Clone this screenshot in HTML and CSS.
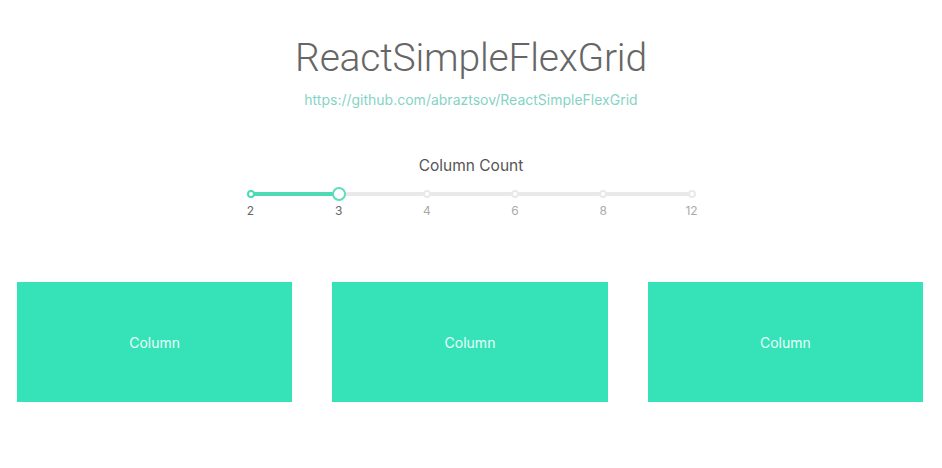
FILE: index.html
```html
<!DOCTYPE html>
<html>
<head>
<meta charset="utf-8">
<link rel="stylesheet" href="styles.css">
</head>
<body>
<div class="page">
  <header class="header">
    <h1 class="title">ReactSimpleFlexGrid</h1>
    <a class="link" href="#">https://github.com/abraztsov/ReactSimpleFlexGrid</a>
  </header>
  <section class="control">
    <div class="control-label">Column Count</div>
    <div class="slider">
      <div class="rail"></div>
      <div class="track" style="width: 20%"></div>
      <span class="dot active" style="left: 0%"></span>
      <span class="dot active" style="left: 20%"></span>
      <span class="dot" style="left: 40%"></span>
      <span class="dot" style="left: 60%"></span>
      <span class="dot" style="left: 80%"></span>
      <span class="dot" style="left: 100%"></span>
      <span class="handle" style="left: 20%"></span>
      <span class="mark active" style="left: 0%">2</span>
      <span class="mark active" style="left: 20%">3</span>
      <span class="mark" style="left: 40%">4</span>
      <span class="mark" style="left: 60%">6</span>
      <span class="mark" style="left: 80%">8</span>
      <span class="mark" style="left: 100%">12</span>
    </div>
  </section>
  <main class="grid">
    <div class="col">Column</div>
    <div class="col">Column</div>
    <div class="col">Column</div>
  </main>
</div>
</body>
</html>
```
FILE: styles.css
```css
html, body {
  margin: 0;
  padding: 0;
  background: #fff;
}
body {
  font-family: "Inter", "Helvetica Neue", "Liberation Sans", sans-serif;
  color: #555;
}
.page {
  display: flex;
  flex-direction: column;
  align-items: center;
  padding-top: 31px;
}
.header {
  display: flex;
  flex-direction: column;
  align-items: center;
}
.title {
  margin: 0;
  font-family: "Roboto", "Liberation Sans", sans-serif;
  font-size: 39px;
  font-weight: 300;
  line-height: 54px;
  color: #666;
  letter-spacing: -0.2px;
}
.link {
  margin-top: 6px;
  font-size: 14px;
  line-height: 18px;
  color: #86d3c6;
  text-decoration: none;
}
.control {
  margin-top: 47px;
  display: flex;
  flex-direction: column;
  align-items: center;
}
.control-label {
  font-size: 15.5px;
  line-height: 20px;
  color: #555;
  font-weight: 400;
}
.slider {
  position: relative;
  width: 441px;
  height: 34px;
  margin-top: 11px;
}
.rail {
  position: absolute;
  left: 0;
  right: 0;
  top: 5px;
  height: 4px;
  border-radius: 2px;
  background: #e9e9e9;
}
.track {
  position: absolute;
  left: 0;
  top: 5px;
  height: 4px;
  border-radius: 2px;
  background: #4fdab6;
}
.dot {
  position: absolute;
  top: 3px;
  width: 8px;
  height: 8px;
  margin-left: -4px;
  box-sizing: border-box;
  border-radius: 50%;
  border: 2px solid #e9e9e9;
  background: #fff;
}
.dot.active {
  border-color: #4fdab6;
}
.handle {
  position: absolute;
  top: 0;
  width: 14px;
  height: 14px;
  margin-left: -7px;
  box-sizing: border-box;
  border-radius: 50%;
  border: 2px solid #5fdcbc;
  background: #fff;
}
.mark {
  position: absolute;
  top: 17px;
  transform: translateX(-50%);
  font-size: 12px;
  line-height: 14px;
  color: #aaa;
}
.mark.active {
  color: #666;
}
.grid {
  align-self: stretch;
  display: flex;
  gap: 40px;
  padding: 0 19px 0 17px;
  margin-top: 61px;
}
.col {
  flex: 1;
  height: 120px;
  background: #36e3b9;
  color: #eafff8;
  font-size: 14px;
  display: flex;
  align-items: center;
  justify-content: center;
}
```
